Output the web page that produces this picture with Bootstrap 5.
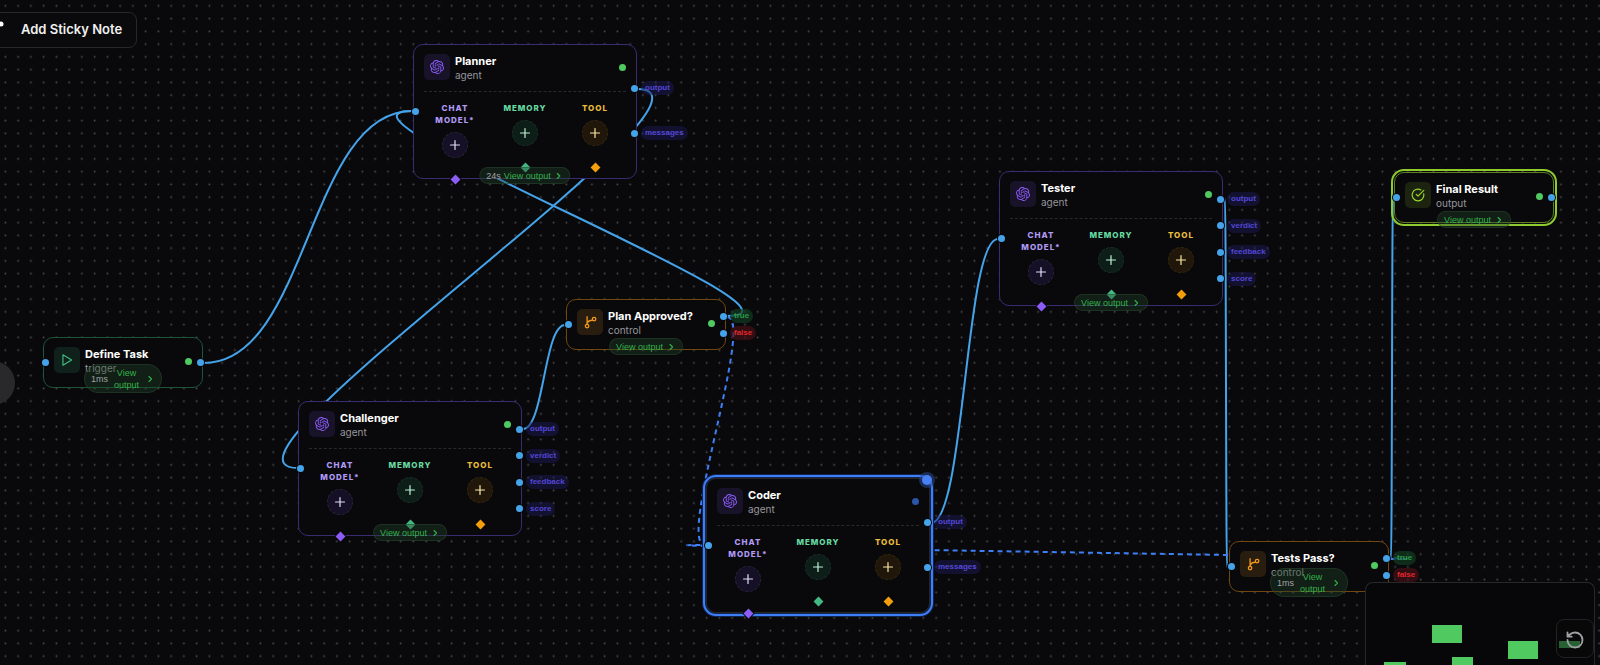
<!DOCTYPE html>
<html lang="en" data-bs-theme="dark">
<head>
<meta charset="utf-8">
<meta name="viewport" content="width=device-width, initial-scale=1">
<title>Workflow canvas</title>
<link href="https://cdn.jsdelivr.net/npm/bootstrap@5.3.0/dist/css/bootstrap.min.css" rel="stylesheet">
<style>
:root{--wire:#45a3ea;--ok:#50c961;--violet:#8b5cf6;--green:#10b981;--amber:#f59e0b}
body{background:#09090b;font-family:Inter,"Liberation Sans",sans-serif;color:#fafafa}
.flow{min-height:100vh}
button{font-family:inherit}
.layer{pointer-events:none}
.wires path{fill:none;stroke:var(--wire);stroke-width:2}
.wires .pending{stroke:#3f7ff5;stroke-dasharray:5 4}

/* nodes on the free canvas */
.flow-node{position:absolute;width:160px;min-height:51px;padding:9px 10px;background:#09090b;border:1px solid var(--edge);border-radius:10px}
.agent{--edge:#3b2c72;--tone:#8b5cf6;--tint:#181329;width:224px;padding-bottom:0}
.trigger{--edge:#1c5538;--tone:#3fba80;--tint:#10211c}
.control{--edge:#70470e;--tone:#f59a1b;--tint:#291d10}
.result{--edge:#5d8022;--tone:#9ad62f;--tint:#1c2410;outline:2px solid #8fcb2e;outline-offset:1px}
.current{--edge:#252528;outline:2px solid #3f7ff5;outline-offset:1px;box-shadow:0 0 0 4px #12244f}
.n-define{left:43px;top:337px}
.n-planner{left:413px;top:44px}
.n-challenger{left:298px;top:401px}
.n-approved{left:566px;top:299px}
.n-coder{left:706px;top:478px}
.n-tester{left:999px;top:171px}
.n-tests{left:1229px;top:541px}
.n-final{left:1394px;top:172px}

.node-head{gap:5px}
.node-icon{width:26px;height:26px;border-radius:5px;background:var(--tint);color:var(--tone)}
.node-icon svg{width:14px;height:14px}
.node-title{font-size:11px;line-height:14px;font-weight:700;margin:0}
.node-kind{font-size:10px;line-height:14px;color:#96969c}
.state{width:7px;height:7px;border-radius:50%;background:var(--ok)}
.current .state{background:#2b55a6}
.agent .state{margin-top:10px}
.agent .node-head{height:38px;border-bottom:1px dashed #29292d}
.slots{display:grid;grid-template-columns:repeat(3,1fr);gap:8px;margin-top:10px}
.slot-name{font-size:8px;line-height:12px;font-weight:800;letter-spacing:1px;text-align:center}
.s-chat{color:#b09af5}.s-memory{color:#66dba2}.s-tool{color:#e9bd3b}
.add{width:26px;height:26px;border-radius:50%;margin:6px 0 18px;padding:0;border:1px dashed #29263a;background:#151026;color:#e2dcfa}
.s-memory .add{background:#0d1d18;border-color:#1b3027;color:#bdf2d8}
.s-tool .add{background:#20170a;border-color:#35280f;color:#fbe6a4}
.add svg{width:12px;height:12px}
.gem{width:7px;height:7px;transform:rotate(45deg);margin-bottom:-5px;background:var(--violet);box-shadow:0 0 0 1px #09090b}
.s-memory .gem{background:#42b883}.s-tool .gem{background:var(--amber)}

.port{width:7px;height:7px;border-radius:50%;background:var(--wire);box-shadow:0 0 0 1px #09090b;flex:none}
.port-in{position:absolute;left:-2px;top:50%;margin-top:-4px}
.port-out{position:absolute;right:-2px;top:50%;margin-top:-4px}
.outs{position:absolute;left:calc(100% - 5px);top:9px;height:31px}
.outs-two{top:36px;height:59px}
.outs-four{top:20px;height:94px}
.out{gap:3px;height:14px}
.out-name{font-family:"Liberation Sans",sans-serif;font-size:8px;line-height:14px;font-weight:700;padding:0 4px;border-radius:7px;background:#1e1a5580;color:#5447d8}
.out-yes{background:#123d20b0;color:#2a9c48}
.out-no{background:#461216b0;color:#e3262e}

.view{position:absolute;left:50%;bottom:-6px;transform:translateX(-50%);height:17px;padding:0 6px;gap:3px;border:1px solid #2c452f80;border-radius:9px;background:#1f452a60;color:#34b24a;font-family:"Liberation Sans",sans-serif;font-size:9px;line-height:12px;white-space:nowrap}
.view svg{width:10px;height:10px}
.view .took{color:#a1a1a6}
.view-tall{width:78px;height:29px;border-radius:15px;white-space:normal;z-index:2}
.view-tall .txt{flex:1}
.beacon{position:absolute;right:-3px;top:-4px;width:10px;height:10px;border-radius:50%;background:#4a80f7;box-shadow:0 0 0 3px #2a509880}

.sticky-btn{position:absolute;left:-30px;top:12px;height:36px;padding:0 14px 1px 50px;background:#0a0a0c;border:1px solid #28282b;border-radius:8px;font-size:13px;font-weight:600;color:#f0f0f0}
.sticky-btn svg{position:absolute;left:23px;top:3px;width:12px;height:20px}
.side-handle{position:absolute;left:-29px;top:361px;width:44px;height:44px;border-radius:50%;background:#29292b;border:0}
.map{position:absolute;right:5px;top:582px;bottom:0;width:230px;background:#070709;border:1px solid #28282b;border-bottom:0;border-radius:8px 8px 0 0}
.reset{position:absolute;right:0;top:36px;width:38px;height:39px;padding:0;border:1px solid #222225;border-radius:8px;background:#0a0a0c40;color:#a0a0a4}
.reset svg{width:20px;height:20px}
</style>
</head>
<body>
<svg class="d-none" xmlns="http://www.w3.org/2000/svg">
  <symbol id="i-ai" viewBox="0 0 24 24"><path fill="currentColor" d="M22.2819 9.8211a5.9847 5.9847 0 0 0-.5157-4.9108 6.0462 6.0462 0 0 0-6.5098-2.9A6.0651 6.0651 0 0 0 4.9807 4.1818a5.9847 5.9847 0 0 0-3.9977 2.9 6.0462 6.0462 0 0 0 .7427 7.0966 5.98 5.98 0 0 0 .511 4.9107 6.051 6.051 0 0 0 6.5146 2.9001A5.9847 5.9847 0 0 0 13.2599 24a6.0557 6.0557 0 0 0 5.7718-4.2058 5.9894 5.9894 0 0 0 3.9977-2.9001 6.0557 6.0557 0 0 0-.7475-7.0729zm-9.022 12.6081a4.4755 4.4755 0 0 1-2.8764-1.0408l.1419-.0804 4.7783-2.7582a.7948.7948 0 0 0 .3927-.6813v-6.7369l2.02 1.1686a.071.071 0 0 1 .038.052v5.5826a4.504 4.504 0 0 1-4.4945 4.4944zm-9.6607-4.1254a4.4708 4.4708 0 0 1-.5346-3.0137l.142.0852 4.783 2.7582a.7712.7712 0 0 0 .7806 0l5.8428-3.3685v2.3324a.0804.0804 0 0 1-.0332.0615L9.74 19.9502a4.4992 4.4992 0 0 1-6.1408-1.6464zM2.3408 7.8956a4.485 4.485 0 0 1 2.3655-1.9728V11.6a.7664.7664 0 0 0 .3879.6765l5.8144 3.3543-2.0201 1.1685a.0757.0757 0 0 1-.071 0l-4.8303-2.7865A4.504 4.504 0 0 1 2.3408 7.872zm16.5963 3.8558L13.1038 8.364 15.1192 7.2a.0757.0757 0 0 1 .071 0l4.8303 2.7913a4.4944 4.4944 0 0 1-.6765 8.1042v-5.6772a.79.79 0 0 0-.407-.667zm2.0107-3.0231l-.142-.0852-4.7735-2.7818a.7759.7759 0 0 0-.7854 0L9.409 9.2297V6.8974a.0662.0662 0 0 1 .0284-.0615l4.8303-2.7866a4.4992 4.4992 0 0 1 6.6802 4.66zM8.3065 12.863l-2.02-1.1638a.0804.0804 0 0 1-.038-.0567V6.0742a4.4992 4.4992 0 0 1 7.3757-3.4537l-.142.0805L8.704 5.459a.7948.7948 0 0 0-.3927.6813zm1.0976-2.3654l2.602-1.4998 2.6069 1.4998v2.9994l-2.5974 1.4997-2.6067-1.4997Z"/></symbol>
  <symbol id="i-play" viewBox="0 0 24 24"><path d="M5 3l15 9-15 9z" fill="none" stroke="currentColor" stroke-width="2" stroke-linejoin="round"/></symbol>
  <symbol id="i-branch" viewBox="0 0 24 24"><g fill="none" stroke="currentColor" stroke-width="2.2" stroke-linecap="round"><path d="M7 3v12M16 9c-5 0-8 2-9 6"/><circle cx="19" cy="7" r="3"/><circle cx="7" cy="19" r="3"/></g></symbol>
  <symbol id="i-check" viewBox="0 0 24 24"><path d="M21.8 10A10 10 0 1 1 17 3.3M9 11l3 3L22 4" fill="none" stroke="currentColor" stroke-width="2" stroke-linecap="round" stroke-linejoin="round"/></symbol>
  <symbol id="i-plus" viewBox="0 0 12 12"><path d="M6 1.5v9M1.5 6h9" stroke="currentColor" stroke-width="1.2" stroke-linecap="round"/></symbol>
  <symbol id="i-next" viewBox="0 0 10 10"><path d="M4 2.500L6.500 5 4 7.500" fill="none" stroke="currentColor" stroke-width="1.1" stroke-linecap="round" stroke-linejoin="round"/></symbol>
</svg>

<main class="flow position-relative overflow-hidden">
  <svg class="layer wires position-absolute top-0 start-0 w-100 h-100" aria-hidden="true">
    <defs><pattern id="grid" x="-1" y="-.5" width="12.75" height="12.75" patternUnits="userSpaceOnUse"><circle cx="6.400" cy="6.400" r=".9" fill="#4e4e53"/></pattern></defs>
    <rect width="100%" height="100%" fill="url(#grid)"/>
    <path d="M204 363C308 363 308 111 412 111"/>
    <path d="M637 89C751 89 184 468 298 468"/>
    <path d="M727 316C838 316 301 111 412 111"/>
    <path d="M523 429C544 429 544 325 565 325"/>
    <path d="M931 523C965 523 965 239 998 239"/>
    <path d="M1225 199C1226 199 1226 567 1227 567"/>
    <path d="M1391 559C1392 559 1392 197 1393 197"/>
    <path class="pending" d="M727 317C756 317 676 545 705 545"/>
    <path class="pending" d="M1390 559C1553 559 542 545 705 545"/>
  </svg>

  <button type="button" class="sticky-btn"><svg viewBox="0 0 12 20" aria-hidden="true"><circle cx="7" cy="8" r="2.500" fill="#fff"/></svg>Add Sticky Note</button>
  <button type="button" class="side-handle" aria-label="Open panel"></button>

  <article class="flow-node trigger n-define">
    <header class="node-head d-flex align-items-start">
      <span class="node-icon d-flex align-items-center justify-content-center"><svg><use href="#i-play"/></svg></span>
      <div class="flex-grow-1"><h2 class="node-title">Define Task</h2><div class="node-kind">trigger</div></div>
      <span class="state align-self-center"></span>
    </header>
    <span class="port port-in"></span><span class="port port-out"></span>
    <button type="button" class="view view-tall d-flex align-items-center"><span class="took">1ms</span><span class="txt">View output</span><svg><use href="#i-next"/></svg></button>
  </article>

  <article class="flow-node agent n-planner">
    <header class="node-head d-flex align-items-start">
      <span class="node-icon d-flex align-items-center justify-content-center"><svg><use href="#i-ai"/></svg></span>
      <div class="flex-grow-1"><h2 class="node-title">Planner</h2><div class="node-kind">agent</div></div>
      <span class="state"></span>
    </header>
    <div class="slots">
      <div class="s-chat d-flex flex-column align-items-center"><span class="slot-name">CHAT MODEL*</span><button type="button" class="add d-flex align-items-center justify-content-center" aria-label="Add chat model"><svg><use href="#i-plus"/></svg></button><span class="gem"></span></div>
      <div class="s-memory d-flex flex-column align-items-center"><span class="slot-name">MEMORY</span><button type="button" class="add d-flex align-items-center justify-content-center" aria-label="Add memory"><svg><use href="#i-plus"/></svg></button><span class="gem"></span></div>
      <div class="s-tool d-flex flex-column align-items-center"><span class="slot-name">TOOL</span><button type="button" class="add d-flex align-items-center justify-content-center" aria-label="Add tool"><svg><use href="#i-plus"/></svg></button><span class="gem"></span></div>
    </div>
    <span class="port port-in"></span>
    <div class="outs outs-two d-flex flex-column justify-content-between">
      <div class="out d-flex align-items-center"><span class="port"></span><span class="out-name">output</span></div>
      <div class="out d-flex align-items-center"><span class="port"></span><span class="out-name">messages</span></div>
    </div>
    <button type="button" class="view d-flex align-items-center"><span class="took">24s</span><span>View output</span><svg><use href="#i-next"/></svg></button>
  </article>

  <article class="flow-node agent n-challenger">
    <header class="node-head d-flex align-items-start">
      <span class="node-icon d-flex align-items-center justify-content-center"><svg><use href="#i-ai"/></svg></span>
      <div class="flex-grow-1"><h2 class="node-title">Challenger</h2><div class="node-kind">agent</div></div>
      <span class="state"></span>
    </header>
    <div class="slots">
      <div class="s-chat d-flex flex-column align-items-center"><span class="slot-name">CHAT MODEL*</span><button type="button" class="add d-flex align-items-center justify-content-center" aria-label="Add chat model"><svg><use href="#i-plus"/></svg></button><span class="gem"></span></div>
      <div class="s-memory d-flex flex-column align-items-center"><span class="slot-name">MEMORY</span><button type="button" class="add d-flex align-items-center justify-content-center" aria-label="Add memory"><svg><use href="#i-plus"/></svg></button><span class="gem"></span></div>
      <div class="s-tool d-flex flex-column align-items-center"><span class="slot-name">TOOL</span><button type="button" class="add d-flex align-items-center justify-content-center" aria-label="Add tool"><svg><use href="#i-plus"/></svg></button><span class="gem"></span></div>
    </div>
    <span class="port port-in"></span>
    <div class="outs outs-four d-flex flex-column justify-content-between">
      <div class="out d-flex align-items-center"><span class="port"></span><span class="out-name">output</span></div>
      <div class="out d-flex align-items-center"><span class="port"></span><span class="out-name">verdict</span></div>
      <div class="out d-flex align-items-center"><span class="port"></span><span class="out-name">feedback</span></div>
      <div class="out d-flex align-items-center"><span class="port"></span><span class="out-name">score</span></div>
    </div>
    <button type="button" class="view d-flex align-items-center"><span>View output</span><svg><use href="#i-next"/></svg></button>
  </article>

  <article class="flow-node control n-approved">
    <header class="node-head d-flex align-items-start">
      <span class="node-icon d-flex align-items-center justify-content-center"><svg><use href="#i-branch"/></svg></span>
      <div class="flex-grow-1"><h2 class="node-title">Plan Approved?</h2><div class="node-kind">control</div></div>
      <span class="state align-self-center"></span>
    </header>
    <span class="port port-in"></span>
    <div class="outs d-flex flex-column justify-content-between">
      <div class="out d-flex align-items-center"><span class="port"></span><span class="out-name out-yes">true</span></div>
      <div class="out d-flex align-items-center"><span class="port"></span><span class="out-name out-no">false</span></div>
    </div>
    <button type="button" class="view d-flex align-items-center"><span>View output</span><svg><use href="#i-next"/></svg></button>
  </article>

  <article class="flow-node agent current n-coder">
    <header class="node-head d-flex align-items-start">
      <span class="node-icon d-flex align-items-center justify-content-center"><svg><use href="#i-ai"/></svg></span>
      <div class="flex-grow-1"><h2 class="node-title">Coder</h2><div class="node-kind">agent</div></div>
      <span class="state"></span>
    </header>
    <div class="slots">
      <div class="s-chat d-flex flex-column align-items-center"><span class="slot-name">CHAT MODEL*</span><button type="button" class="add d-flex align-items-center justify-content-center" aria-label="Add chat model"><svg><use href="#i-plus"/></svg></button><span class="gem"></span></div>
      <div class="s-memory d-flex flex-column align-items-center"><span class="slot-name">MEMORY</span><button type="button" class="add d-flex align-items-center justify-content-center" aria-label="Add memory"><svg><use href="#i-plus"/></svg></button><span class="gem"></span></div>
      <div class="s-tool d-flex flex-column align-items-center"><span class="slot-name">TOOL</span><button type="button" class="add d-flex align-items-center justify-content-center" aria-label="Add tool"><svg><use href="#i-plus"/></svg></button><span class="gem"></span></div>
    </div>
    <span class="port port-in"></span>
    <div class="outs outs-two d-flex flex-column justify-content-between">
      <div class="out d-flex align-items-center"><span class="port"></span><span class="out-name">output</span></div>
      <div class="out d-flex align-items-center"><span class="port"></span><span class="out-name">messages</span></div>
    </div>
    <span class="beacon"></span>
  </article>

  <article class="flow-node agent n-tester">
    <header class="node-head d-flex align-items-start">
      <span class="node-icon d-flex align-items-center justify-content-center"><svg><use href="#i-ai"/></svg></span>
      <div class="flex-grow-1"><h2 class="node-title">Tester</h2><div class="node-kind">agent</div></div>
      <span class="state"></span>
    </header>
    <div class="slots">
      <div class="s-chat d-flex flex-column align-items-center"><span class="slot-name">CHAT MODEL*</span><button type="button" class="add d-flex align-items-center justify-content-center" aria-label="Add chat model"><svg><use href="#i-plus"/></svg></button><span class="gem"></span></div>
      <div class="s-memory d-flex flex-column align-items-center"><span class="slot-name">MEMORY</span><button type="button" class="add d-flex align-items-center justify-content-center" aria-label="Add memory"><svg><use href="#i-plus"/></svg></button><span class="gem"></span></div>
      <div class="s-tool d-flex flex-column align-items-center"><span class="slot-name">TOOL</span><button type="button" class="add d-flex align-items-center justify-content-center" aria-label="Add tool"><svg><use href="#i-plus"/></svg></button><span class="gem"></span></div>
    </div>
    <span class="port port-in"></span>
    <div class="outs outs-four d-flex flex-column justify-content-between">
      <div class="out d-flex align-items-center"><span class="port"></span><span class="out-name">output</span></div>
      <div class="out d-flex align-items-center"><span class="port"></span><span class="out-name">verdict</span></div>
      <div class="out d-flex align-items-center"><span class="port"></span><span class="out-name">feedback</span></div>
      <div class="out d-flex align-items-center"><span class="port"></span><span class="out-name">score</span></div>
    </div>
    <button type="button" class="view d-flex align-items-center"><span>View output</span><svg><use href="#i-next"/></svg></button>
  </article>

  <article class="flow-node control n-tests">
    <header class="node-head d-flex align-items-start">
      <span class="node-icon d-flex align-items-center justify-content-center"><svg><use href="#i-branch"/></svg></span>
      <div class="flex-grow-1"><h2 class="node-title">Tests Pass?</h2><div class="node-kind">control</div></div>
      <span class="state align-self-center"></span>
    </header>
    <span class="port port-in"></span>
    <div class="outs d-flex flex-column justify-content-between">
      <div class="out d-flex align-items-center"><span class="port"></span><span class="out-name out-yes">true</span></div>
      <div class="out d-flex align-items-center"><span class="port"></span><span class="out-name out-no">false</span></div>
    </div>
    <button type="button" class="view view-tall d-flex align-items-center"><span class="took">1ms</span><span class="txt">View output</span><svg><use href="#i-next"/></svg></button>
  </article>

  <article class="flow-node result n-final">
    <header class="node-head d-flex align-items-start">
      <span class="node-icon d-flex align-items-center justify-content-center"><svg><use href="#i-check"/></svg></span>
      <div class="flex-grow-1"><h2 class="node-title">Final Result</h2><div class="node-kind">output</div></div>
      <span class="state align-self-center"></span>
    </header>
    <span class="port port-in"></span><span class="port port-out"></span>
    <button type="button" class="view d-flex align-items-center"><span>View output</span><svg><use href="#i-next"/></svg></button>
  </article>

  <aside class="map overflow-hidden" aria-label="Minimap">
    <svg class="w-100 h-100 d-block" aria-hidden="true"><g fill="#50c961"><rect x="66" y="42" width="30" height="18"/><rect x="142" y="58" width="30" height="18"/><rect x="86" y="74" width="21" height="9"/><rect x="18" y="79" width="22" height="9"/><rect x="193" y="58" width="21" height="7" fill="#317d3f"/></g></svg>
    <button type="button" class="reset" aria-label="Reset view"><svg viewBox="0 0 24 24" fill="none" stroke="currentColor" stroke-width="2.200" stroke-linecap="round" stroke-linejoin="round"><path d="M3 12a9 9 0 1 0 9-9 9.800 9.800 0 0 0-6.700 2.700L3 8M3 3v5h5"/></svg></button>
  </aside>
</main>
<script src="https://cdn.jsdelivr.net/npm/bootstrap@5.3.0/dist/js/bootstrap.bundle.min.js"></script>
</body>
</html>
